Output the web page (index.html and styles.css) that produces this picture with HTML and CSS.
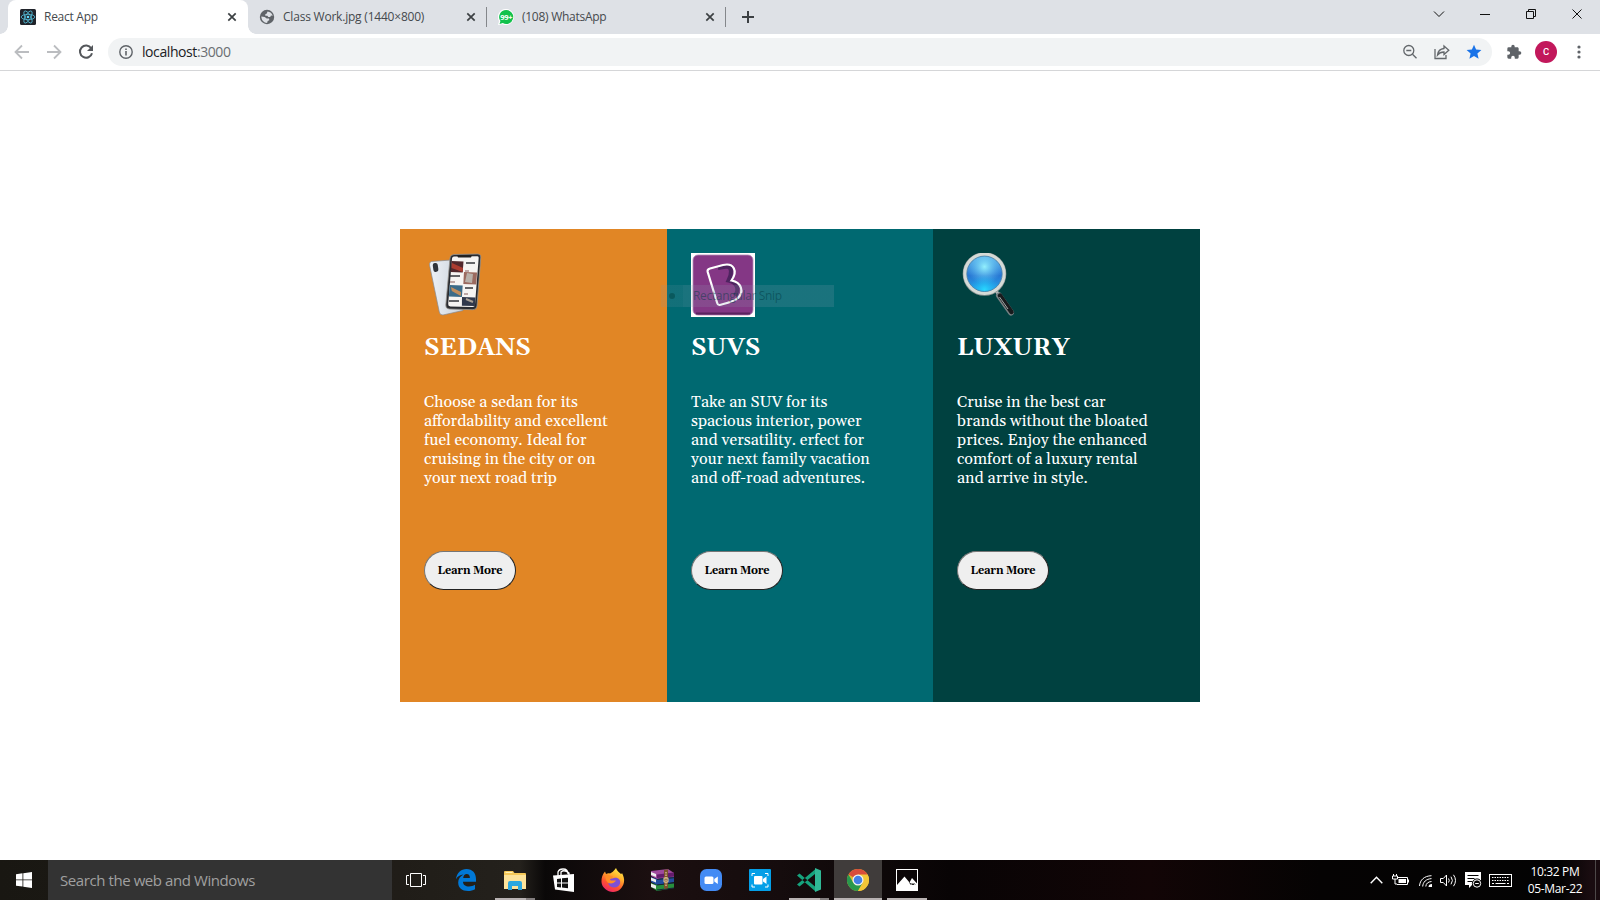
FILE: index.html
```html
<!DOCTYPE html>
<html lang="en">
<head>
<meta charset="utf-8">
<title>React App</title>
<link rel="stylesheet" href="styles.css">
</head>
<body>
<header class="tabstrip">
  <div class="tab tab-active">
    <svg class="fav" viewBox="0 0 16 16"><rect width="16" height="16" rx="1.5" fill="#20232a"/><g fill="none" stroke="#53b9d4" stroke-width=".85"><ellipse cx="8" cy="8" rx="6.8" ry="2.7"/><ellipse cx="8" cy="8" rx="6.8" ry="2.7" transform="rotate(60 8 8)"/><ellipse cx="8" cy="8" rx="6.8" ry="2.7" transform="rotate(120 8 8)"/></g><circle cx="8" cy="8" r="1.3" fill="#61dafb"/></svg>
    <span class="tab-title t-react">React App</span>
    <svg class="x" viewBox="0 0 10 10"><path d="M1.3 1.3l7.4 7.4M8.7 1.3L1.3 8.7"/></svg>
  </div>
  <div class="tab tab-second">
    <svg class="fav" viewBox="0 0 16 16"><circle cx="8" cy="8" r="7.2" fill="#5f6368"/><path d="M8.5 2.4c2.6.1 4.7 2 5.2 4.3L12 6.500l-.8 1.500H9.300L8.400 6.700H6.300V5.300l1.500-.8zM2.300 7.500l3.400.4 2 1.500 2.300.2.300 1.600-1.600.8-.6 1.900c-3.200 0-5.700-2.700-5.800-6.400z" fill="#dee1e6"/></svg>
    <span class="tab-title t-class">Class Work.jpg (1440×800)</span>
    <svg class="x" viewBox="0 0 10 10"><path d="M1.300 1.300l7.400 7.400M8.700 1.300L1.300 8.700"/></svg>
  </div>
  <i class="divider"></i>
  <div class="tab tab-third">
    <svg class="fav" viewBox="0 0 16 16"><path d="M8 0a8 8 0 1 1-3.500 15.200L0 16l1-4A8 8 0 0 1 8 0z" fill="#fff"/><path d="M8.200 1a7 7 0 1 1-3.400 13.100L1.600 15l.8-3A7 7 0 0 1 8.200 1z" fill="#12c24c"/><text x="8.200" y="10.800" text-anchor="middle" class="badge">99+</text></svg>
    <span class="tab-title t-wa">(108) WhatsApp</span>
    <svg class="x" viewBox="0 0 10 10"><path d="M1.300 1.300l7.400 7.400M8.700 1.300L1.300 8.700"/></svg>
  </div>
  <i class="divider"></i>
  <svg class="plus" viewBox="0 0 12 12"><path d="M6 0v12M0 6h12" stroke="#3c4043" stroke-width="2"/></svg>
  <div class="controls">
    <svg viewBox="0 0 46 28"><path d="M18 11.500l5 5 5-5"/></svg>
    <svg viewBox="0 0 46 28"><path d="M18 14.500h10"/></svg>
    <svg viewBox="0 0 46 28"><path d="M18.500 11.500h7v7h-7zM20.500 11.500v-2h7v7h-2"/></svg>
    <svg viewBox="0 0 46 28"><path d="M18.500 9.500l9 9m0-9l-9 9"/></svg>
  </div>
</header>
<nav class="toolbar">
  <div class="nav-icons">
    <svg viewBox="0 0 16 16"><path d="M15 8H2M8 1.500L1.500 8 8 14.500" stroke="#bbbdc0"/></svg>
    <svg viewBox="0 0 16 16"><path d="M1 8h13M8 1.500L14.500 8 8 14.500" stroke="#bbbdc0"/></svg>
    <svg viewBox="0 0 16 16"><path d="M13.200 4.300A6.100 6.100 0 1 0 14 9.200" stroke="#54575b" stroke-width="2"/><path d="M15 1v6H9z" fill="#54575b"/></svg>
  </div>
  <div class="omnibox">
    <svg class="info" viewBox="0 0 14 14"><circle cx="7" cy="7" r="6.200" fill="none" stroke="#5f6368" stroke-width="1.400"/><path d="M7 6v4.500M7 3.500v1.400" stroke="#5f6368" stroke-width="1.600"/></svg>
    <span class="url"><b>localhost</b>:3000</span>
    <div class="omni-right">
      <svg viewBox="0 0 16 16"><circle cx="6.800" cy="6.500" r="5"/><path d="M10.500 10.200l4 4.100M4.300 6.500h5"/></svg>
      <svg viewBox="0 0 16 16"><path d="M1 5v9.500h11V11M10 2l4.800 4.200L10 10.500V8C7 8 5 9 3.500 11 4 7 6.500 4.800 10 4.500z"/></svg>
      <svg viewBox="0 0 16 16"><path d="M8 .7l2.100 4.900 5.300.4-4 3.500 1.200 5.200L8 11.900l-4.600 2.800 1.200-5.200-4-3.500 5.300-.4z" fill="#1a73e8" stroke="none"/></svg>
    </div>
  </div>
  <svg class="puzzle" viewBox="0 0 24 24"><path fill="#5f6368" d="M20.500 11H19V7c0-1.100-.9-2-2-2h-4V3.500a2.500 2.500 0 0 0-5 0V5H4a2 2 0 0 0-2 2v3.800h1.500a2.700 2.700 0 0 1 0 5.400H2V20a2 2 0 0 0 2 2h3.800v-1.500a2.700 2.700 0 0 1 5.400 0V22H17a2 2 0 0 0 2-2v-4h1.500a2.500 2.500 0 0 0 0-5z"/></svg>
  <span class="avatar">C</span>
  <svg class="dots" viewBox="0 0 4 14"><g fill="#5f6368"><circle cx="2" cy="2" r="1.600"/><circle cx="2" cy="7" r="1.600"/><circle cx="2" cy="12" r="1.600"/></g></svg>
</nav>

<main class="page">
  <div class="cards">
    <section class="card sedans">
      <svg class="pic" viewBox="0 0 64 64">
        <defs><linearGradient id="back" x1="0" x2="1"><stop offset="0" stop-color="#eef2f7"/><stop offset="1" stop-color="#c9d1da"/></linearGradient></defs>
        <path d="M7.500 8.500L27 7l12 50.500-20 4.500q-3 .3-3.700-3L5.500 12q-.3-3 2-3.500z" fill="url(#back)" stroke="#858a90" stroke-width=".7"/>
        <rect x="9" y="10" width="5" height="9" rx="2.200" fill="#30343a" transform="rotate(-8 11 14)"/>
        <path d="M30 1.500l24-.5q3 .2 2.800 3L53 53q-.4 3.700-4 3.700l-24-.7q-3.500-.4-3.200-4L26 5q.4-3.300 4-3.500z" fill="#292b30" stroke="#98948f" stroke-width=".8"/>
        <path d="M30 3.500l23.500-.3q1.300 0 1.200 1.500L51 51.500q-.2 2.600-2.600 2.600l-22-.6q-2.400-.2-2.200-2.500L28 5.500q.3-2 2-2z" fill="#f6f4f2"/>
        <path d="M33 2h15l-1 2.500H34z" fill="#222"/>
        <path d="M27.500 8l12 .5-.8 11-12-.5z" fill="#52282c"/><path d="M28 10l11 5-.4 4-11-4z" fill="#ac3c30"/>
        <path d="M40 19l13 .5-.7 12-13-.5z" fill="#9b6a5f"/><path d="M43 20l6 1-1 9-7-1z" fill="#b9b1aa"/>
        <path d="M25.700 32l13 .5-.8 11.500-13-.5z" fill="#3c6b88"/><path d="M27 34l10 5-.2 4-9-5z" fill="#c18c5b"/>
        <path d="M38 44l13.500.5-.6 8.500-13-.3z" fill="#30384b"/><path d="M42 46l7 3" stroke="#a9a095" stroke-width="2"/>
        <path d="M42 10h9M26 23h10M41 35h8M25 48h10" stroke="#35353a" stroke-width="1.300"/><path d="M41 18h4M26 29h5M40 41h4" stroke="#865c5b"/>
      </svg>
      <h2>SEDANS</h2>
      <p>Choose a sedan for its<br>affordability and excellent<br>fuel economy. Ideal for<br>cruising in the city or on<br>your next road trip</p>
      <button>Learn More</button>
    </section>
    <section class="card suvs">
      <svg class="pic" viewBox="0 0 64 64">
        <rect width="64" height="64" fill="#fff"/><rect x="2" y="2" width="60" height="60" rx="5" fill="#843785" stroke="#b48bb5" stroke-width=".8"/><path d="M5 60.500h54" stroke="#5b235f" stroke-width="2"/>
        <path d="M27 15l9-1.500c5 0 5 7 1.500 14 9 2 11 9 6.500 15" fill="none" stroke="#4e2460" stroke-width="4"/>
        <path d="M19 15.500l13-3.500c11-2.500 15 6 8.500 15.500C51 29.500 53 39 47 45c-4 3.500-9 4.500-18.500 7q-1.700.2-2.300-2L16.700 19q-.7-2.700 2.300-3.500z" fill="none" stroke="#fff" stroke-width="2.200"/>
      </svg>
      <h2>SUVS</h2>
      <p>Take an SUV for its<br>spacious interior, power<br>and versatility. erfect for<br>your next family vacation<br>and off-road adventures.</p>
      <button>Learn More</button>
      <div class="snip"><i></i><span>Rectangular Snip</span></div>
    </section>
    <section class="card luxury">
      <svg class="pic" viewBox="0 0 64 64">
        <defs><linearGradient id="lens" x1="0" y1="0" x2="0" y2="1"><stop offset="0" stop-color="#5fb4ea"/><stop offset=".55" stop-color="#2877d3"/><stop offset="1" stop-color="#22a6ec"/></linearGradient><radialGradient id="shine" cx=".5" cy=".3" r=".5"><stop offset="0" stop-color="#93f0fd"/><stop offset="1" stop-color="#5cc0f5" stop-opacity="0"/></radialGradient><radialGradient id="glow" cx=".5" cy=".95" r=".42"><stop offset="0" stop-color="#28d8ff"/><stop offset="1" stop-color="#20b6f5" stop-opacity="0"/></radialGradient></defs>
        <path d="M39 38l4 5" stroke="#b8bcbc" stroke-width="3"/>
        <path d="M42 42.500L54 59.500" stroke="#778183" stroke-width="6" stroke-linecap="round"/><path d="M43 42.500L54.500 59" stroke="#171b1d" stroke-width="4.500" stroke-linecap="round"/><path d="M42.500 44L51 56" stroke="#a7aaaa" stroke-width="1"/>
        <circle cx="27.500" cy="21" r="19.800" fill="none" stroke="#8b9493" stroke-width="4"/><circle cx="27.500" cy="20.800" r="19.700" fill="#d5dad6" stroke="#d5dad6" stroke-width="3"/>
        <circle cx="27.500" cy="20.800" r="17.700" fill="url(#lens)"/><circle cx="27.500" cy="20.800" r="17.700" fill="url(#shine)"/><circle cx="27.500" cy="20.800" r="17.700" fill="url(#glow)" stroke="#477da5" stroke-width=".8"/>
      </svg>
      <h2>LUXURY</h2>
      <p>Cruise in the best car<br>brands without the bloated<br>prices. Enjoy the enhanced<br>comfort of a luxury rental<br>and arrive in style.</p>
      <button>Learn More</button>
    </section>
  </div>
</main>

<footer class="taskbar">
  <div class="start"><svg viewBox="0 0 16 16"><path fill="#fff" d="M0 2.200L6.500 1.300v6.200H0zM7.300 1.200L16 0v7.500H7.300zM0 8.300h6.500v6.300L0 13.700zM7.300 8.300H16V16l-8.700-1.200z"/></svg></div>
  <div class="search"><span>Search the web and Windows</span></div>
  <div class="apps">
    <div class="app"><svg width="20" height="14" viewBox="0 0 20 14"><path d="M4.500.5h11v13h-11zM3 2.500H.5v9H3M17 2.500h2.500v9H17" fill="none" stroke="#fff"/></svg></div>
    <div class="app"><svg width="20" height="22" viewBox="0 0 20 22"><path fill="#0078d7" d="M0 10.200C.7 4 5 0 10.500 0 16.500 0 20 4.300 20 10v2.700H7c0 3.200 2.600 4.700 6 4.700 2.300 0 4.200-.6 6-1.700v4.500C17 21.400 14.700 22 12 22c-6 0-9.800-3-9.800-8.500 0-3.400 2-6.300 5.300-7.900C3.800 5.600 1.500 7.800 0 10.200zM7.200 9h6.700c0-2.700-1.100-4-3.200-4-2 0-3.200 1.600-3.500 4z"/></svg></div>
    <div class="app open"><svg width="22" height="19" viewBox="0 0 22 19"><path d="M0 1q0-1 1-1h8l1.500 2H21q1 0 1 1v15H0z" fill="#f5c857"/><path d="M0 4h22v14H0z" fill="#fde39a"/><path d="M1.500 1.500h7" stroke="#fff0b5"/><path d="M4 19v-7q0-2 2-2h10q2 0 2 2v7h-4v-4H8v4z" fill="#2ba7df"/></svg></div>
    <div class="app"><svg width="22" height="24" viewBox="0 0 22 24"><path d="M0 7.500L21 6v18L2 21.500z" fill="#fff"/><path d="M5 8V4q1-3 5-3 5 0 5 5M8 8V4q3-3 8 1v2" fill="none" stroke="#fff" stroke-width="1.300"/><path d="M4 11l4-.5v4H4zM9 10.300l6-.6v4.800H9zM4 15.500h4v4L4 19zM9 15.500h6v4.800l-6-.7z" fill="#111"/></svg></div>
    <div class="app"><svg width="24" height="24" viewBox="0 0 24 24"><defs><linearGradient id="fox" x1=".8" y1="0" x2=".3" y2="1"><stop offset="0" stop-color="#fff14b"/><stop offset=".35" stop-color="#ffb02d"/><stop offset=".7" stop-color="#ff522f"/><stop offset="1" stop-color="#ee236b"/></linearGradient></defs><path d="M15 0c1 3 3 4 5 6 1-.5 1-1 1-1 1.500 3 2.500 6 2 9-1 6-5.500 10-11 10S.8 19.500.5 14C.3 10 1.500 6 4 3.500L5 6c1.500-.8 3-.8 4-.5C10.500 5 13 3 15 0z" fill="url(#fox)"/><path d="M8 10c1 1 3 .6 5 0 4-1 7 2 6 5.500-1 4-6 5-9.500 3C7 17 6.500 13 8 10z" fill="#7e50d4"/><path d="M5 6c3 1 4 2 7 2.500-1 2-3 2-3 3.500 2 1 5 0 6 .8-1.500 2-4 3-6.500 2.500C6 15 3.500 11 5 6z" fill="#ff8d25"/></svg></div>
    <div class="app"><svg width="25" height="22" viewBox="0 0 25 22"><path d="M1 2l17-2 6 4v4L7 10 1 7z" fill="#9e4a9d"/><path d="M7 5.500l17-2v4L7 9z" fill="#641c6c"/><path d="M1 8l6 2 17-2v5L7 16l-6-3z" fill="#214d9d"/><path d="M1 14l6 2 17-2v5L7 22l-6-4z" fill="#278e3c"/><path d="M1 3l5 2v3L1 6zm0 5.500l5 2v3l-5-2zm0 6l5 2v3.500l-5-2z" fill="#eee"/><path d="M7 10.500l17-1.800M7 16l17-2M7 21l17-2" stroke="#152637"/><path d="M14 1l4-.7v19l-4 .8z" fill="#7b532d"/><path d="M16 3v15" stroke="#d0b28d" stroke-width="1.500" stroke-dasharray="1.500 1"/><path d="M14 9h4v4h-4z" fill="none" stroke="#e2ca9d"/></svg></div>
    <div class="app"><svg width="22" height="22" viewBox="0 0 22 22"><rect width="22" height="22" rx="6.500" fill="#438bf4"/><rect x="4.500" y="7.500" width="9" height="7.500" rx="1.500" fill="#fff"/><path d="M14.300 10l3.500-2.500v7.500l-3.500-2.500z" fill="#fff"/></svg></div>
    <div class="app"><svg width="22" height="22" viewBox="0 0 22 22"><rect width="22" height="22" rx="1" fill="#049fe7"/><rect x="5" y="7" width="8.500" height="8.500" rx="1" fill="#fff"/><path d="M14 10l3.500-2.500v7.500L14 12.500z" fill="#fff"/><path d="M3 7V4.500h3M16 4.500h3V7M3 15.500V18h3m10 0h3v-2.500" fill="none" stroke="#fff" stroke-width="1"/></svg></div>
    <div class="app open"><svg width="24" height="24" viewBox="0 0 24 24"><path d="M0 7.500L2.500 5.500 18 18.500v4.500zM0 16.500l2.500 2L18 6V1.500z" fill="#16a37d"/><path d="M18 0l6 2.500v19L18 24z" fill="#30b896"/></svg></div>
    <div class="app current"><svg width="22" height="22" viewBox="0 0 22 22"><circle cx="11" cy="11" r="11" fill="#e1b82e"/><path d="M11 11L1.470 5.500A11 11 0 0 1 20.530 5.500z" fill="#d84c3b"/><path d="M1.470 5.500A11 11 0 0 0 11 22l4.800-8.200L11 11 6.200 13.500z" fill="#29984d"/><path d="M11 5.500h9.530A11 11 0 0 1 11 22l4.800-8.200z" fill="#f2c638"/><circle cx="11" cy="11" r="5.500" fill="#f5f4ee"/><circle cx="11" cy="11" r="4.300" fill="#437fe7"/></svg></div>
    <div class="app open photos"><svg width="22" height="22" viewBox="0 0 22 22"><rect x=".5" y=".5" width="21" height="21" fill="none" stroke="#fff"/><path d="M1 16l7.500-8.500 5 6L16 9l5.500 6v6H1z" fill="#fff"/><path d="M13.500 13.500l1.500 2 1-1 1 1.500 1-1.500 1 1" fill="none" stroke="#050404"/></svg></div>
  </div>
  <div class="tray">
    <svg width="13" height="8" viewBox="0 0 13 8"><path d="M.7 7.200l5.800-6 5.800 6" stroke-width="1.400"/></svg>
    <svg class="battery" width="17" height="12" viewBox="0 0 17 12"><path d="M5 3.500h10.500v7H5M1.500 0v2m3-2v2M.5 2h5v3h-5zM3 5v5h2"/><path d="M6.500 5h7.500v4H6.500zM16 5.500h1v3h-1z" fill="#fff" stroke="none"/></svg>
    <svg class="wifi" width="13" height="12" viewBox="0 0 13 12"><path d="M.5 11C1 5 5 1 12.500.7M3.700 11.500C4 7 7 4 12.500 3.600M6.800 11.500c.2-3 2.200-4.700 5.700-5" /><path d="M9.500 12q0-3 3.500-3v3z" fill="#fff" stroke="none"/></svg>
    <svg width="17" height="13" viewBox="0 0 17 13"><path d="M.5 4.500h2.800L6.500 1v11L3.300 8.500H.5zM8.500 4.500q1.500 2 0 4M11 2.700q2.800 3.800 0 7.600M13.500.8q4 5.700 0 11.400"/></svg>
    <svg width="17" height="16" viewBox="0 0 17 16"><path d="M0 0h16v13H7l-3 3v-3H0z" fill="#fff" stroke="none"/><path d="M2.500 3.500h11M2.500 6.500h7M2.500 9.500h5" stroke="#050404"/><circle cx="12" cy="11.500" r="4.600" fill="#050404" stroke="#050404"/><circle cx="12" cy="11.500" r="3.700"/><path d="M10.200 11.500h3.600"/></svg>
    <svg class="keyboard" width="23" height="13" viewBox="0 0 23 13"><rect x=".5" y=".5" width="22" height="12"/><path d="M3 3.500h17M3 6.500h17" stroke-dasharray="1.500 1"/><path d="M3 9.500h2m1.500 0h10m1.500 0h2"/></svg>
  </div>
  <div class="clock"><span class="time">10:32 PM</span><span class="date">05-Mar-22</span></div>
  <i class="show-desktop"></i>
</footer>
</body>
</html>
```

FILE: styles.css
```css
* { box-sizing: border-box; }
body {
  margin: 0;
  width: 1600px;
  height: 900px;
  overflow: hidden;
  display: flex;
  flex-direction: column;
  background: #fff;
  font-family: "Segoe UI", "Open Sans", "Noto Sans", sans-serif;
}
svg { display: block; flex: none; }

.tabstrip {
  height: 34px;
  padding-left: 8px;
  display: flex;
  align-items: center;
  background: #dee1e6;
  flex: none;
}
.tab {
  width: 238px;
  height: 34px;
  padding: 0 10px 0 11px;
  display: flex;
  align-items: center;
}
.tab-active {
  width: 240px;
  padding: 0 11px 0 12px;
  background: #fff;
  border-radius: 8px 8px 0 0;
  position: relative;
}
.tab-active::before,
.tab-active::after {
  content: "";
  position: absolute;
  bottom: 0;
  width: 8px;
  height: 8px;
}
.tab-active::before { left: -8px; background: radial-gradient(circle at 0 0, transparent 7.5px, #fff 8px); }
.tab-active::after { right: -8px; background: radial-gradient(circle at 100% 0, transparent 7.5px, #fff 8px); }
.fav { width: 16px; height: 16px; margin-right: 8px; }
.badge { font: bold 7.5px "Open Sans", sans-serif; letter-spacing: -.4px; fill: #fff; }
.tab-title { flex: 1; padding-bottom: 1px; font-size: 12px; color: #45494d; white-space: nowrap; letter-spacing: -.27px; }
.t-class { letter-spacing: -.21px; }
.x { width: 10px; height: 10px; fill: none; stroke: #3c4043; stroke-width: 1.7; }
.divider { width: 1px; height: 20px; background: #84878b; }
.plus { width: 12px; height: 12px; margin-left: 16px; }
.controls { margin: 0 0 6px auto; display: flex; }
.controls svg { width: 46px; height: 28px; fill: none; stroke: #111; }

.toolbar {
  height: 37px;
  padding: 0 19px 1px 14px;
  display: flex;
  align-items: center;
  border-bottom: 1px solid #d5d6d8;
  flex: none;
}
.nav-icons { display: flex; gap: 16px; margin-right: 14px; }
.nav-icons svg { width: 16px; height: 16px; fill: none; stroke-width: 1.8; }
.omnibox {
  flex: 1;
  height: 28px;
  padding: 0 10px 0 11px;
  display: flex;
  align-items: center;
  background: #f1f3f4;
  border-radius: 14px;
}
.info { width: 14px; height: 14px; }
.url { margin-left: 9px; font-size: 14px; letter-spacing: -.42px; color: #6a6e72; }
.url b { font-weight: 400; color: #202124; }
.omni-right { margin-left: auto; display: flex; gap: 16px; }
.omni-right svg { width: 16px; height: 16px; fill: none; stroke: #63676b; stroke-width: 1.3; }
.puzzle { width: 16px; height: 16px; margin-left: 14px; }
.avatar {
  flex: none;
  width: 22px;
  height: 22px;
  margin-left: 13px;
  border-radius: 50%;
  background: #c2185b;
  color: #fff;
  font: 500 9.5px/22px Roboto, sans-serif;
  text-align: center;
}
.dots { width: 4px; height: 14px; margin-left: 20px; }

.page { flex: 1; display: flex; justify-content: center; align-items: flex-start; padding-top: 158px; }
.cards { width: 800px; height: 473px; display: grid; grid-template-columns: 267px 266px 267px; }
.card {
  position: relative;
  padding: 24px;
  color: #fff;
  font-family: Georgia, Gelasio, "Liberation Serif", serif;
}
.sedans { background: #e18625; }
.suvs { background: #006971; }
.luxury { background: #004140; }
.pic { width: 64px; height: 64px; }
.card h2 { margin: 17px 0 31px; font-size: 24px; line-height: 28px; }
.card p { margin: 0 0 63px; font-size: 16px; line-height: 19px; white-space: nowrap; }
.card button {
  display: block;
  width: 92px;
  height: 39px;
  padding: 0;
  border: 1px solid;
  border-color: #767676 #222 #222 #767676;
  border-radius: 20px;
  background: #efefef;
  color: #000;
  font: bold 11px Georgia, Gelasio, "Liberation Serif", serif;
  letter-spacing: -.18px;
}
.snip {
  position: absolute;
  left: -6px;
  top: 56px;
  width: 173px;
  height: 22px;
  display: flex;
  align-items: center;
  background: linear-gradient(90deg, rgba(125, 150, 165, .15) 22px, rgba(145, 160, 180, .18) 22px);
  font: 12px/22px "Segoe UI", "Open Sans", sans-serif;
  color: rgba(0, 55, 65, .48);
}
.snip i { width: 6px; height: 6px; margin: 0 20px 0 8px; border-radius: 50%; background: rgba(0, 65, 65, .5); }
.snip span { margin-left: -2px; white-space: nowrap; letter-spacing: -.33px; }

.taskbar {
  height: 40px;
  display: flex;
  flex: none;
  background: linear-gradient(90deg, #191712 0, #201d18 400px, #24211c 520px, #0a0808 545px, #1b0f10 650px, #150c0d 780px, #080405 950px, #120506 1150px, #050303 1320px, #030303 1560px, #190c10 1590px);
}
.start { width: 48px; display: flex; align-items: center; justify-content: center; }
.start svg { width: 16px; height: 16px; }
.search { width: 344px; padding-left: 12px; display: flex; align-items: center; background: #333; color: #a0a0a0; font-size: 15px; }
.search span { letter-spacing: -.42px; white-space: nowrap; }
.apps { display: flex; gap: 1px; }
.app { width: 48px; height: 40px; display: flex; align-items: center; justify-content: center; }
.app:first-child { margin-right: 1px; }
.open { background: linear-gradient(90deg, #b8b2b2 31px, #837e7e 31px) 4px 38px / 40px 2px no-repeat; }
.photos { background: linear-gradient(#b8b2b2, #b8b2b2) 4px 38px / 40px 2px no-repeat; }
.current { background: #403c3b; border-bottom: 2px solid #b8b2b2; padding-top: 2px; }
.tray { margin-left: auto; display: flex; align-items: center; gap: 8px; }
.tray svg { fill: none; stroke: #fff; }
.tray .battery { margin: 0 2px 0 1px; }
.tray .wifi { margin-top: 2px; }
.tray .keyboard { margin-left: -1px; }
.clock { width: 79px; margin-left: 4px; display: flex; flex-direction: column; align-items: center; justify-content: center; padding: 0 1px 1px 0; color: #fff; font-size: 12px; line-height: 17px; letter-spacing: -.36px; }
.show-desktop { width: 5px; border-left: 1px solid #4d4848; }
```
